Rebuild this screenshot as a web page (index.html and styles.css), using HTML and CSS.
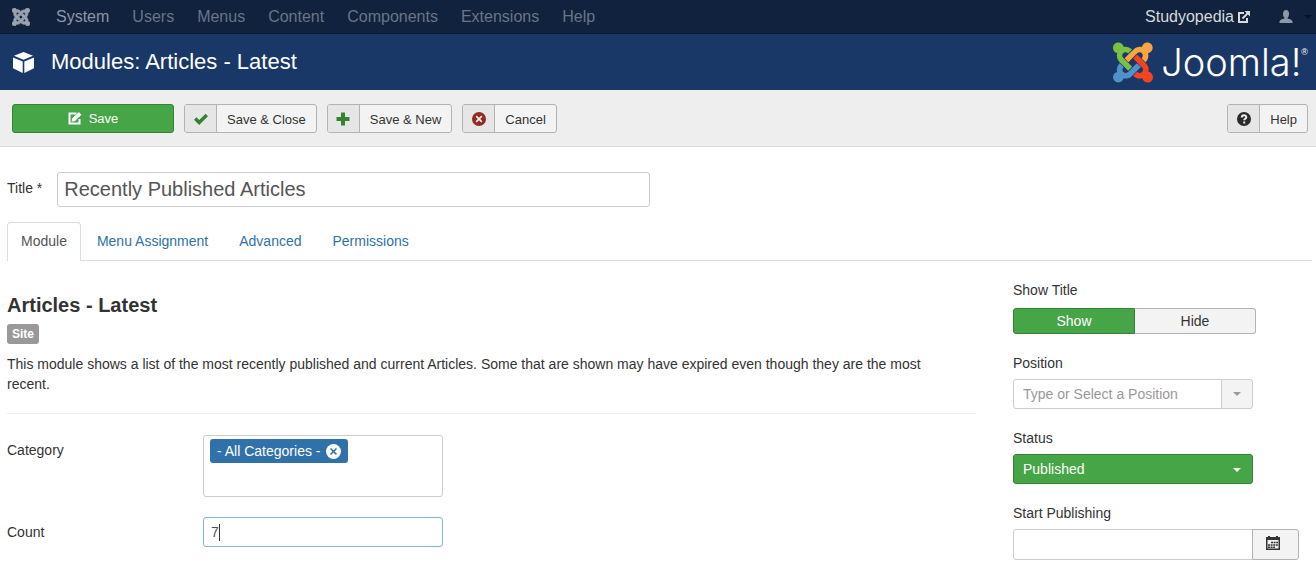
FILE: index.html
```
<!DOCTYPE html>
<html lang="en">
<head>
<meta charset="utf-8">
<title>Modules: Articles - Latest</title>
<link rel="stylesheet" href="styles.css">
</head>
<body>
<svg class="defs" aria-hidden="true">
  <defs>
    <path id="arm-blue" d="M16.719 14.759L14.22 17.26l-2.37 2.37-.462.466c-1.368 1.365-3.297 1.83-5.047 1.397-.327 1.424-1.604 2.49-3.13 2.49C1.438 23.983 0 22.547 0 20.772c0-1.518 1.055-2.789 2.469-3.123-.446-1.76.016-3.705 1.396-5.08l.179-.18 2.37 2.37-.184.181c-.769.779-.769 2.024 0 2.789.771.78 2.022.78 2.787 0l.465-.465 2.367-2.371 2.502-2.506z"/>
    <path id="arm-red" d="M17.643 21.411c-1.822.563-3.885.12-5.328-1.318l-.18-.185 2.365-2.369.18.184c.771.768 2.018.768 2.787 0 .765-.765.769-2.01-.004-2.781l-.466-.465-2.365-2.37-2.502-2.503 2.37-2.369 2.499 2.505 2.367 2.37.464.464c1.365 1.36 1.846 3.278 1.411 5.021 1.56.224 2.759 1.56 2.759 3.18 0 1.784-1.439 3.21-3.209 3.21-1.545 0-2.851-1.096-3.135-2.565z"/>
    <path id="arm-orange" d="M6.975 9.461l2.508-2.505 2.37-2.369.462-.461c1.361-1.367 3.284-1.835 5.024-1.405C17.614 1.137 18.977 0 20.604 0c1.772 0 3.211 1.437 3.211 3.209 0 1.631-1.216 2.978-2.79 3.186.519 1.799.068 3.816-1.35 5.234l-.182.184-2.369-2.369.184-.184c.769-.77.769-2.016 0-2.783-.766-.766-2.011-.768-2.781.003l-.462.461-2.37 2.369-2.505 2.502z"/>
    <path id="arm-green" d="M4.322 12.108l-.461-.462C2.43 10.215 1.986 8.17 2.529 6.358 1.078 6.057 0 4.766 0 3.226 0 1.449 1.439.02 3.214.02c1.557 0 2.871 1.113 3.147 2.591 1.71-.387 3.572.09 4.912 1.417l.185.183-2.37 2.369-.184-.183c-.771-.768-2.021-.768-2.788 0-.765.767-.765 2.01.006 2.78l.462.461 2.37 2.37 2.5 2.506-2.37 2.369-2.5-2.505z"/>
  </defs>
</svg>

<nav class="navbar">
  <a class="navbar-mark" href="#" aria-label="Home">
    <svg width="18" height="18" viewBox="0 0 24 24" fill="currentColor" stroke="currentColor"><use href="#arm-blue"/><use href="#arm-red"/><use href="#arm-orange"/><use href="#arm-green"/></svg>
  </a>
  <a class="nav-item nav-item-strong" href="#">System</a>
  <a class="nav-item" href="#">Users</a>
  <a class="nav-item" href="#">Menus</a>
  <a class="nav-item" href="#">Content</a>
  <a class="nav-item" href="#">Components</a>
  <a class="nav-item" href="#">Extensions</a>
  <a class="nav-item" href="#">Help</a>
  <a class="nav-site" href="#">Studyopedia
    <svg width="12" height="12" viewBox="0 0 12 12" fill="none" stroke="currentColor" stroke-width="2"><path d="M6 2H1v9h8V7"/><path d="M4.500 7.500L10 2"/><path d="M6.500 0H12v5.500z" fill="currentColor" stroke="none"/></svg>
  </a>
  <button class="nav-user" type="button" aria-label="User menu">
    <svg width="14" height="13" viewBox="0 0 14 13" fill="currentColor"><ellipse cx="7" cy="4" rx="3" ry="4"/><path d="M5.500 6h3v2.500c2 .5 5 1.200 5 3.500v1H.5v-1c0-2.300 3-3 5-3.500z"/></svg>
    <span class="caret"></span>
  </button>
</nav>

<header class="header">
  <svg width="21" height="21" viewBox="0 0 21 21" fill="#fff"><path d="M10.500 0L20 3.800l-9.500 4L1 3.800z"/><path d="M0 5.500l9.700 3.900V21L0 16.200z"/><path d="M21 5.500l-9.700 3.900V21L21 16.200z"/></svg>
  <h1 class="page-title">Modules: Articles - Latest</h1>
  <a class="brand" href="#" aria-label="Joomla!">
    <svg class="brand-mark" width="40" height="41" viewBox="0 0 24 24"><use href="#arm-blue" fill="#5091cd"/><use href="#arm-red" fill="#f44321"/><use href="#arm-orange" fill="#f9a541"/><use href="#arm-green" fill="#7ac143"/></svg>
    <span class="brand-name">Joomla!</span><span class="brand-reg">®</span>
  </a>
</header>

<div class="toolbar">
  <button class="btn btn-save" type="button">
    <svg width="14" height="13" viewBox="0 0 14 13"><path d="M8.500 1.500H1.500v10h10V7" fill="none" stroke="#fff" stroke-width="2"/><path d="M3.500 9.800l.8-3.500L10.800 0 13.500 2.700 7 9z" fill="#fff"/></svg>
    Save
  </button>
  <button class="btn" type="button"><span class="btn-icon"><svg width="14" height="12" viewBox="0 0 14 12"><path d="M1.200 5.500l4 4L12.800 2" fill="none" stroke="#378137" stroke-width="3.500"/></svg></span><span class="btn-text">Save &amp; Close</span></button>
  <button class="btn" type="button"><span class="btn-icon"><svg width="14" height="14" viewBox="0 0 14 14"><path d="M7 .5v13M.5 7h13" stroke="#378137" stroke-width="4"/></svg></span><span class="btn-text">Save &amp; New</span></button>
  <button class="btn" type="button"><span class="btn-icon"><svg width="14" height="14" viewBox="0 0 14 14"><circle cx="7" cy="7" r="7" fill="#942a25"/><path d="M4.200 4.200l5.600 5.600m0-5.600l-5.600 5.600" stroke="#eee" stroke-width="1.700"/></svg></span><span class="btn-text">Cancel</span></button>
  <button class="btn btn-help" type="button"><span class="btn-icon"><svg width="14" height="14" viewBox="0 0 14 14"><circle cx="7" cy="7" r="7" fill="#2b2b2b"/><path d="M4.800 5.500c0-3 4.500-2.800 4.500-.3C9.300 6.800 7.200 6.700 7.200 8.300M7.200 9.500v1.900" fill="none" stroke="#eee" stroke-width="2"/></svg></span><span class="btn-text">Help</span></button>
</div>

<main class="content">
  <div class="title-row">
    <label for="title">Title *</label>
    <input class="field field-title" id="title" type="text" value="Recently Published Articles">
  </div>

  <nav class="tabs">
    <a class="tab tab-active" href="#">Module</a>
    <a class="tab" href="#">Menu Assignment</a>
    <a class="tab" href="#">Advanced</a>
    <a class="tab" href="#">Permissions</a>
  </nav>

  <div class="columns">
    <section class="module">
      <h2 class="module-name">Articles - Latest</h2>
      <span class="badge">Site</span>
      <p class="module-text">This module shows a list of the most recently published and current Articles. Some that are shown may have expired even though they are the most recent.</p>
      <hr class="rule">
      <div class="control">
        <label for="category">Category</label>
        <div class="chips">
          <span class="chip">- All Categories -
            <button class="chip-remove" id="category" type="button" aria-label="Remove All Categories"><svg width="15" height="15" viewBox="0 0 14 14"><circle cx="7" cy="7" r="7" fill="#fff"/><path d="M4.200 4.200l5.600 5.600m0-5.600l-5.600 5.600" stroke="#3071a9" stroke-width="1.500"/></svg></button>
          </span>
        </div>
      </div>
      <div class="control">
        <label for="count">Count</label>
        <input class="field field-active" id="count" type="text" value="7">
      </div>
    </section>

    <aside class="side">
      <div class="side-group">
        <span id="show-title">Show Title</span>
        <div class="toggle" role="group" aria-labelledby="show-title">
          <button class="toggle-item toggle-on" type="button" aria-pressed="true">Show</button>
          <button class="toggle-item" type="button" aria-pressed="false">Hide</button>
        </div>
      </div>
      <div class="side-group">
        <label for="position">Position</label>
        <div class="combo">
          <input class="field combo-input" id="position" type="text" placeholder="Type or Select a Position">
          <button class="addon" type="button" aria-label="Open positions"><span class="caret"></span></button>
        </div>
      </div>
      <div class="side-group">
        <label for="status">Status</label>
        <div class="status">
          <select class="status-select" id="status"><option>Published</option></select>
          <span class="caret status-caret"></span>
        </div>
      </div>
      <div class="side-group">
        <label for="start">Start Publishing</label>
        <div class="combo combo-date">
          <input class="field combo-input" id="start" type="text">
          <button class="addon addon-date" type="button" aria-label="Pick a date">
            <svg width="14" height="14" viewBox="0 0 14 14"><path d="M0 1h2V0h2v1h6V0h2v1h2v3H0z" fill="#333"/><path d="M.75 3v10.250h12.500V3" fill="none" stroke="#333" stroke-width="1.500"/><path d="M5 6.500h7M2 9h10M2 11.300h7" stroke="#333" stroke-width="1.500" stroke-dasharray="2 .6"/></svg>
          </button>
        </div>
      </div>
    </aside>
  </div>
</main>
</body>
</html>
```
FILE: styles.css
```
* { box-sizing: border-box; }
body {
  margin: 0;
  background: #fff;
  color: #333;
  font: 14px/20px "Liberation Sans", Arial, sans-serif;
}
a { color: #3071a9; text-decoration: none; }
button, input, select { font: inherit; color: inherit; margin: 0; }
button { cursor: pointer; }
svg { flex: none; display: block; }
.defs { position: absolute; width: 0; height: 0; }
.caret {
  flex: none;
  width: 0;
  height: 0;
  border: 4px solid transparent;
  border-top-color: currentColor;
  border-bottom: 0;
}

.navbar {
  display: flex;
  align-items: center;
  gap: 23px;
  height: 34px;
  padding: 0 4px 0 12px;
  background: #10223e;
  border-bottom: 1px solid #0b1a30;
  font-size: 16px;
}
.navbar-mark { color: #9ba3af; margin-right: 3px; }
.nav-item { color: #6a7585; }
.nav-item-strong { color: #8e96a3; }
.nav-site {
  display: flex;
  align-items: center;
  gap: 4px;
  margin-left: auto;
  color: #d9d9d9;
}
.nav-user {
  display: flex;
  align-items: center;
  gap: 11px;
  margin-left: 6px;
  padding: 0;
  border: 0;
  background: none;
  color: #8f98a5;
}
.nav-user .caret { color: #071222; }

.header {
  display: flex;
  align-items: center;
  gap: 17px;
  height: 56px;
  padding: 0 8px 0 13px;
  background: #1a3867;
  color: #fff;
}
.page-title { margin: 0; font-size: 22px; font-weight: 400; line-height: 32px; }
.brand { display: flex; align-items: center; margin-left: auto; color: #fff; }
.brand-name {
  margin-left: 8px;
  font: 300 38px/40px Inter, sans-serif;
}
.brand-reg { align-self: flex-start; font-size: 9px; }

.toolbar {
  display: flex;
  gap: 10px;
  padding: 14px 8px 13px 12px;
  background: #eee;
  border-bottom: 1px solid #d8d8d8;
}
.btn {
  display: flex;
  align-items: stretch;
  height: 29px;
  padding: 0;
  border: 1px solid #b3b3b3;
  border-radius: 3px;
  background: #f3f3f3;
  font-size: 13px;
  overflow: hidden;
}
.btn-icon {
  display: flex;
  align-items: center;
  justify-content: center;
  width: 32px;
  background: #e6e6e6;
  border-right: 1px solid #b3b3b3;
}
.btn-text { padding: 0 10px; line-height: 29px; }
.btn-save {
  align-items: center;
  justify-content: center;
  gap: 7px;
  width: 162px;
  background: #46a546;
  border-color: #378137;
  color: #fff;
  line-height: 29px;
}
.btn-help { margin-left: auto; }

.content { padding: 25px 4px 0 7px; }
.title-row { display: flex; gap: 15px; line-height: 32px; }
.field {
  width: 240px;
  height: 30px;
  padding: 4px 7px;
  border: 1px solid #ccc;
  border-radius: 3px;
  background: #fff;
  color: #555;
}
.field-title { width: 593px; height: 35px; padding: 4px 6px; font-size: 20px; }
.field-active {
  border-color: #7fb3dc;
  background: linear-gradient(#333, #333) 15px center / 1px 17px no-repeat;
}
.field::placeholder { color: #999; opacity: 1; }

.tabs { display: flex; gap: 1px; margin-top: 15px; border-bottom: 1px solid #ddd; }
.tab { padding: 8px 14px 9px; border: 1px solid transparent; border-bottom: 0; line-height: 20px; }
.tab-active {
  padding: 8px 13px 9px;
  margin-bottom: -1px;
  border-color: #ddd;
  border-radius: 4px 4px 0 0;
  background: #fff;
  color: #555;
}

.columns {
  display: grid;
  grid-template-columns: minmax(0, 1fr) 299px;
  gap: 37px;
  padding-top: 19px;
}
.module-name { margin: 15px 0 8px; font-size: 20px; line-height: 20px; }
.badge {
  display: inline-block;
  padding: 0 5px;
  border-radius: 3px;
  background: #999;
  color: #fff;
  font-size: 12px;
  font-weight: 700;
}
.module-text { margin: 10px 0 19px; padding-right: 24px; }
.rule { margin: 0 0 21px; border: 0; border-top: 1px solid #eee; }
.control {
  display: grid;
  grid-template-columns: 196px 240px;
  align-items: start;
  margin-bottom: 20px;
}
.control label { padding-top: 5px; }
.chips {
  min-height: 62px;
  padding: 3px 6px;
  border: 1px solid #ccc;
  border-radius: 3px;
}
.chip {
  display: inline-flex;
  align-items: center;
  gap: 6px;
  height: 24px;
  padding: 0 7px;
  border-radius: 3px;
  background: #3071a9;
  color: #fff;
}
.chip-remove { padding: 0; border: 0; background: none; }

.side-group { margin-bottom: 19px; }
.side-group > label, .side-group > span { display: block; margin-bottom: 6px; }
.toggle { display: flex; width: 243px; margin-top: 8px; }
.toggle-item {
  flex: 1;
  height: 26px;
  padding: 0;
  border: 1px solid #b3b3b3;
  border-left: 0;
  border-radius: 0 3px 3px 0;
  background: #f3f3f3;
}
.toggle-on {
  border: 1px solid #378137;
  border-radius: 3px 0 0 3px;
  background: #46a546;
  color: #fff;
}
.combo { display: flex; width: 240px; }
.combo-input { flex: 1; min-width: 0; padding: 4px 9px; border-radius: 3px 0 0 3px; }
.addon {
  display: flex;
  align-items: center;
  justify-content: center;
  width: 32px;
  margin-left: -1px;
  padding: 0;
  border: 1px solid #ccc;
  border-radius: 0 3px 3px 0;
  background: #f3f3f3;
  color: #999;
}
.combo-date { width: 286px; }
.combo-date .field { height: 31px; }
.addon-date { width: 47px; padding: 0 6px 4px 0; border-color: #b3b3b3; }
.status { position: relative; width: 240px; }
.status-select {
  display: block;
  appearance: none;
  width: 100%;
  height: 30px;
  padding: 0 9px;
  border: 1px solid #378137;
  border-radius: 3px;
  background: #46a546;
  color: #fff;
}
.status-caret { position: absolute; top: 14px; right: 12px; color: #fff; pointer-events: none; }
```
